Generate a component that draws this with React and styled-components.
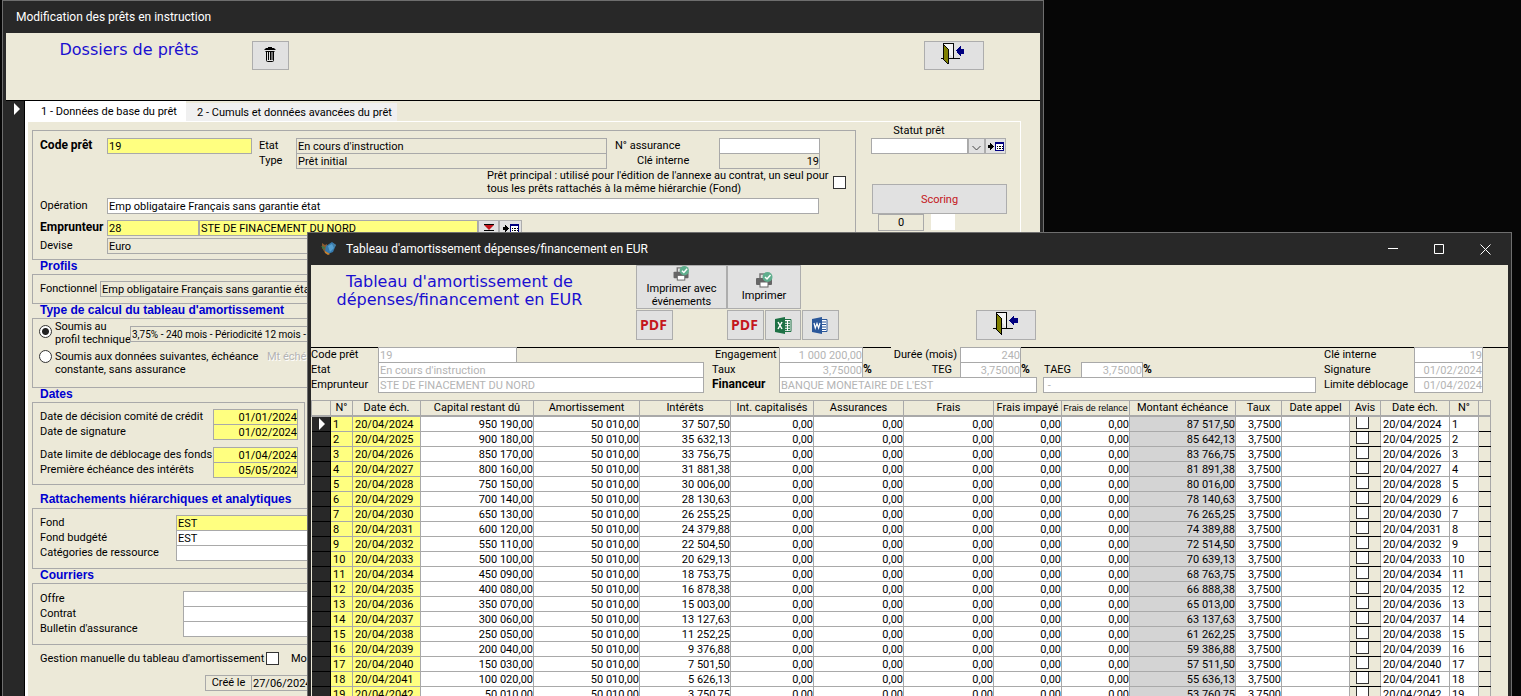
import React from "react";
import styled, { createGlobalStyle, css } from "styled-components";

const GlobalStyle = createGlobalStyle`
  *, *::before, *::after { box-sizing: border-box; }
  body { margin: 0; background: #060606; }
  body, input, button, select {
    font-family: Roboto, "Liberation Sans", sans-serif;
    font-size: 11px;
    line-height: 15px;
    color: #000;
  }
`;

const beige = "#ece9d8";
const yellow = "#ffff80";
const frame = "#282828";
const line = "#a9a9a9";

const Desktop = styled.main`
  position: relative;
  height: 100vh;
  overflow: hidden;
  background: #060606;
`;

const Window = styled.section`
  position: absolute;
  display: flex;
  flex-direction: column;
  background: ${frame};
  border: 1px solid #6e6e6e;
  border-bottom: 0;
  padding: 0 3px;
`;

const LoanWindow = styled(Window)`
  top: 0;
  left: 2px;
  width: 68.5vw;
  height: 100%;
`;

const ScheduleWindow = styled(Window)`
  top: 232px;
  left: 307px;
  right: 9px;
  bottom: 0;
`;

const TitleBar = styled.header`
  display: flex;
  flex: none;
  align-items: center;
  height: ${(p) => p.$h}px;
  padding-left: ${(p) => p.$pad}px;
  color: #fff;
  font-size: 12px;
  line-height: 16px;
`;

const WindowControls = styled.div`
  display: flex;
  margin-left: auto;
`;

const ControlButton = styled.button`
  display: flex;
  align-items: center;
  justify-content: center;
  width: 46px;
  height: 31px;
  padding: 0;
  border: 0;
  background: none;
`;

const Client = styled.div`
  display: flex;
  flex: 1;
  flex-direction: column;
  min-height: 0;
  overflow: hidden;
  background: ${beige};
`;

const Banner = styled.div`
  display: flex;
  flex: none;
  align-items: flex-start;
  height: ${(p) => p.$h}px;
  border-bottom: 1px solid #000;
`;

const BannerTitle = styled.h1`
  margin: 0;
  color: #1a0fd0;
  font: 16px/18px "DejaVu Sans", sans-serif;
  text-align: center;
`;

const Button = styled.button`
  display: flex;
  flex: none;
  flex-direction: column;
  align-items: center;
  justify-content: center;
  width: ${(p) => p.$w}px;
  height: ${(p) => p.$h || 30}px;
  padding: 0;
  border: 1px solid #adadad;
  background: #e1e1e1;
  color: ${(p) => p.$color || "#000"};
  line-height: 13px;
`;

const ExitButton = styled(Button)`
  padding: 0 3px 4px 0;
`;

const PdfButton = styled(Button)`
  padding-right: 2px;
  color: #c4161c;
  font: bold 14px/16px "Open Sans", sans-serif;
`;

const RecordArea = styled.div`
  display: flex;
  flex: 1;
  min-height: 0;
`;

const RecordBar = styled.div`
  flex: none;
  width: 19px;
  padding: 2px 0 0 8px;
  border-right: 1px solid #000;
  background: ${frame};
`;

const TabArea = styled.div`
  flex: 1;
  min-width: 0;
  margin-right: 19px;
`;

const TabList = styled.div`
  display: flex;
  align-items: flex-end;
  height: 20px;
`;

const Tab = styled.button`
  width: ${(p) => p.$w}px;
  height: ${(p) => (p.$active ? 20 : 18)}px;
  padding: 0 3px 0 ${(p) => (p.$active ? 10 : 9)}px;
  border: 0;
  background: ${(p) => (p.$active ? "#fff" : "#f0f0f0")};
  white-space: nowrap;
`;

const TabPanel = styled.div`
  display: flex;
  gap: 15px;
  height: 100%;
  padding-left: 4px;
  border: solid #fff;
  border-width: 1px 1px 0 3px;
`;

const FormColumn = styled.div`
  flex: none;
  width: 824px;
  padding-top: 8px;
`;

const SideColumn = styled.div`
  display: flex;
  flex-direction: column;
  width: 136px;
  padding-top: 1px;
`;

const Group = styled.section`
  height: ${(p) => p.$h}px;
  width: ${(p) => (p.$w ? p.$w + "px" : "auto")};
  padding: ${(p) => p.$top}px 7px 0;
  border: 1px solid ${line};
`;

const GroupPair = styled.div`
  display: flex;
  height: 83px;
`;

const GroupTitle = styled.h2`
  height: ${(p) => (p.$spaced ? 23 : 14)}px;
  margin: 0;
  padding: ${(p) => (p.$spaced ? 8 : 0)}px 0 0 8px;
  color: #0000d0;
  font: bold 12px/12px "Liberation Sans", sans-serif;
`;

const Row = styled.div`
  display: flex;
  align-items: flex-start;
  height: 15px;
  margin-top: ${(p) => p.$gap || 0}px;
  padding-left: ${(p) => p.$pad || 0}px;
`;

const Label = styled.label`
  flex: none;
  width: ${(p) => (p.$w ? p.$w + "px" : "auto")};
  padding-right: ${(p) => p.$padRight || 0}px;
  padding-left: ${(p) => p.$padLeft || 0}px;
  text-align: ${(p) => p.$align || "left"};
  line-height: 15px;
  white-space: nowrap;
  ${(p) => p.$masked && css`background: ${beige};`}
  ${(p) =>
    p.$bold &&
    css`
      font-weight: bold;
    `}
`;

const tones = {
  white: "#fff",
  yellow,
  flat: beige,
};

const Field = styled.input.attrs({ readOnly: true })`
  flex: ${(p) => (p.$w ? "none" : 1)};
  width: ${(p) => (p.$w ? p.$w + "px" : "auto")};
  min-width: 0;
  height: 16px;
  padding: 0 ${(p) => (p.$align === "right" ? 0 : 1)}px;
  border: 1px solid ${line};
  outline: 0;
  background: ${(p) => tones[p.$tone || "white"]};
  color: ${(p) => (p.$disabled ? "#b4b4b4" : "#000")};
  text-align: ${(p) => p.$align || "left"};
`;

const ProfileField = styled(Field)`
  margin-top: 6px;
  font-size: 10px;
`;

const StatusSelect = styled.select`
  appearance: none;
  width: 97px;
  height: 16px;
  padding: 0;
  border: 1px solid ${line};
  background: #fff;
`;

const DropArrow = styled.span`
  display: flex;
  align-items: flex-end;
  justify-content: center;
  width: 17px;
  height: 16px;
  padding-bottom: 2px;
  border: 1px solid #adadad;
  background: #e1e1e1;
`;

const NoteRow = styled.div`
  display: flex;
  height: 30px;
  padding: 1px 0 0 447px;
`;

const NoteText = styled.label`
  width: 346px;
  line-height: 13px;
  white-space: nowrap;
`;

const CheckBox = styled.input.attrs({ type: "checkbox" })`
  appearance: none;
  flex: none;
  width: 13px;
  height: 13px;
  margin: 0;
  border: 1px solid #333;
  background: #fff;
`;

const NoteCheck = styled(CheckBox)`
  margin-top: 7px;
`;

const Radio = styled.input.attrs({ type: "radio" })`
  appearance: none;
  flex: none;
  width: 13px;
  height: 13px;
  margin: ${(p) => p.$top}px 3px 0 -1px;
  border: 1px solid #333;
  border-radius: 50%;
  background: #fff;
  &:checked {
    background: radial-gradient(circle, #222 3px, #fff 4px);
  }
`;

const Choice = styled.div`
  display: flex;
  height: 26px;
  margin-bottom: 4px;
`;

const ChoiceText = styled.label`
  width: ${(p) => p.$w}px;
  line-height: 13px;
  white-space: nowrap;
`;

const DimText = styled.span`
  color: #b4b4b4;
  text-shadow: 1px 1px 0 #fff;
  line-height: 13px;
  white-space: nowrap;
`;

const ScoreRow = styled.div`
  display: flex;
  gap: 7px;
  padding-left: 7px;
`;

const ScoreField = styled(Field)`
  height: 17px;
`;

const ScoreSwatch = styled.div`
  width: 24px;
  height: 16px;
  background: #fff;
`;

const FootRow = styled.div`
  display: flex;
  gap: 12px;
  align-items: center;
  margin-top: 6px;
  padding-left: 8px;
`;

const PrintGroup = styled.div`
  display: flex;
  flex: none;
  flex-wrap: wrap;
  align-content: flex-start;
  width: 203px;
  row-gap: 1px;
`;

const PrintMain = styled.div`
  display: flex;
`;

const ExportRow = styled.div`
  display: flex;
  gap: 1px;
  & > :first-child { margin-right: 53px; }
`;

const Summary = styled.div`
  display: flex;
  flex: none;
  gap: 8px;
  height: 53px;
  margin-top: -1px;
  padding-right: 25px;
`;

const SummaryPart = styled.div`
  flex: ${(p) => (p.$w ? "none" : 1)};
  width: ${(p) => (p.$w ? p.$w + "px" : "auto")};
  min-width: 0;
`;

const Percent = styled.span`
  width: ${(p) => p.$w || 9}px;
  font-weight: bold;
  font-size: 12px;
`;

const Grid = styled.table`
  width: calc(100% - 17px);
  table-layout: fixed;
  border-collapse: collapse;
`;

const Head = styled.th`
  height: 15px;
  padding: 0;
  overflow: hidden;
  border: 1px solid ${line};
  border-bottom-width: 2px;
  font-weight: normal;
  line-height: 13px;
  white-space: nowrap;
  ${(p) =>
    p.$small &&
    css`
      font: 9px/12px "Liberation Sans", sans-serif;
    `}
`;

const cellTones = { white: "#fff", yellow, grey: "#d4d4d4", beige };

const Cell = styled.td`
  height: 15px;
  padding: ${(p) => (p.$check ? 0 : 1)}px ${(p) => (p.$align === "right" ? 0 : 2)}px 0;
  border: 1px solid ${line};
  border-bottom-color: ${(p) => (p.$tone === "beige" ? "#000" : line)};
  background: ${(p) => cellTones[p.$tone || "white"]};
  text-align: ${(p) => p.$align || "left"};
  line-height: 13px;
  white-space: nowrap;
`;

const RowMark = styled.th`
  height: 15px;
  padding: 0 0 0 3px;
  border: 1px solid #000;
  border-left: 0;
  background: ${frame};
  line-height: 0;
`;

const GridCheck = styled(CheckBox)`
  display: block;
  height: 12px;
  margin: 0 0 2px 4px;
  border-top: 0;
`;

const Pointer = () => (
  <svg width="7" height="12" viewBox="0 0 7 12" aria-hidden="true">
    <path d="M0 0 L6 6 L0 12Z" fill="#fff" />
  </svg>
);

const TrashIcon = () => (
  <svg width="13" height="17" viewBox="0 0 13 17" fill="none" stroke="#000" aria-hidden="true">
    <path d="M4 .5h4M1.500 1.500h9" />
    <path d="M.5 2.500h11" />
    <path d="M1.500 4.500h9M2.500 4v9.500q0 1 1 1h5q1 0 1-1V4M4.500 5v8M6.500 5v8M8 5v8" />
  </svg>
);

const ExitIcon = () => (
  <svg width="26" height="24" viewBox="0 0 26 24" shapeRendering="crispEdges" aria-hidden="true">
    <path d="M1 17.500h3M10 17.500h11" stroke="#000" />
    <path d="M3.500 1.500h11v16" fill="#f4f4f4" stroke="#000" />
    <path d="M4 2L9 7V23L4 18Z" fill="#808000" stroke="#000" />
    <path d="M17 9l5-5v3h4v5h-4v3z" fill="#000080" />
  </svg>
);

const PrinterIcon = () => (
  <svg width="17" height="16" viewBox="0 0 17 16" aria-hidden="true">
    <path d="M4 7V2h7" fill="none" stroke="#777" strokeWidth="1.500" />
    <rect x="0" y="6" width="16" height="7" rx="1" fill="#666" />
    <rect x="4" y="10" width="8" height="5" fill="#fff" stroke="#666" />
    <circle cx="11.500" cy="5" r="5" fill="#5fae8d" />
    <path d="M9 5l2 2 3.500-4" fill="none" stroke="#fff" strokeWidth="1.500" />
  </svg>
);

const ExcelIcon = () => (
  <svg width="17" height="17" viewBox="0 0 17 17" aria-hidden="true">
    <path d="M9 2.500h7v12H9" fill="#fff" stroke="#1e7145" />
    <path d="M10 5h2M13 5h2M10 7.500h2M13 7.500h2M10 10h2M13 10h2M10 12.500h2M13 12.500h2" stroke="#1e7145" strokeWidth="1.300" />
    <path d="M0 2L10 0V17L0 15Z" fill="#1e7145" />
    <path d="M3 5l4 7M7 5l-4 7" stroke="#fff" strokeWidth="1.500" />
  </svg>
);

const WordIcon = () => (
  <svg width="17" height="17" viewBox="0 0 17 17" aria-hidden="true">
    <path d="M9 2.500h6v12H9" fill="#fff" stroke="#2b579a" />
    <path d="M10 5h4M10 7.500h4M10 10h4M10 12.500h4" stroke="#2b579a" />
    <path d="M0 2L10 0V17L0 15Z" fill="#2b579a" />
    <path d="M2 6l1.300 5L5 6.500 6.600 11 8 6" fill="none" stroke="#fff" strokeWidth="1.200" />
  </svg>
);

const AppIcon = () => (
  <svg width="16" height="14" viewBox="0 0 16 14" aria-hidden="true">
    <path d="M1 1l3 2 2-1v8l-2 1-3-5z" fill="#8c5a30" />
    <path d="M0 4l4 1-1 3z" fill="#3a7a4a" />
    <path d="M5 4l6-4 4 3-3 7-5 2-3-3z" fill="#3579ad" />
    <path d="M7 4l4-2 2 4-4 4z" fill="#559fd0" />
    <path d="M4 9l5 3-2 1-3-2z" fill="#c9822f" />
    <path d="M12 1l3 2-2 3z" fill="#4a7fa0" />
  </svg>
);

const TableIcon = () => (
  <svg width="18" height="11" viewBox="0 0 18 11" shapeRendering="crispEdges" aria-hidden="true">
    <path d="M1 4h2V2l4 3.500L3 9V7H1z" fill="#000" />
    <rect x="8.500" y="1.500" width="8" height="8" fill="#fff" stroke="#000080" />
    <path d="M8 1h9v2H8z" fill="#000080" />
    <path d="M10 5.500h1M12 5.500h2M15 5.500h1M10 7.500h1M12 7.500h2M15 7.500h1" stroke="#000" />
  </svg>
);

const DropIcon = () => (
  <svg width="10" height="9" viewBox="0 0 10 9" aria-hidden="true">
    <path d="M0 1l5 5 5-5z" fill="#c4161c" />
    <path d="M0 .5h10M0 6.500h10" stroke="#000" />
  </svg>
);

const Chevron = () => (
  <svg width="9" height="6" viewBox="0 0 9 6" fill="none" stroke="#444" aria-hidden="true">
    <path d="M.5 1l4 4 4-4" />
  </svg>
);

const amount = (cents) => {
  const whole = String(Math.floor(cents / 100)).replace(/\B(?=(\d{3})+$)/g, "\u00a0");
  return `${whole},${String(cents % 100).padStart(2, "0")}`;
};

const REPAYMENT = 50010;
const COUNT = 20;
const schedule = Array.from({ length: COUNT - 1 }, (_, i) => {
  const interest = Math.round(((COUNT - i) * REPAYMENT * 375) / 100);
  return {
    n: i + 1,
    date: `20/04/${2024 + i}`,
    remaining: amount((COUNT - 1 - i) * REPAYMENT * 100),
    repayment: amount(REPAYMENT * 100),
    interest: amount(interest),
    due: amount(REPAYMENT * 100 + interest),
  };
});

const columns = [
  ["", 19], ["N°", 22], ["Date éch.", 68], ["Capital restant dû", 113], ["Amortissement", 106],
  ["Intérêts", 91], ["Int. capitalisés", 83], ["Assurances", 90], ["Frais", null], ["Frais impayé", 68],
  ["Frais de relance", 68], ["Montant échéance", 106], ["Taux", 46], ["Date appel", 68], ["Avis", 31],
  ["Date éch.", 69], ["N°", 29], ["", 12],
];

const TextRow = ({ id, label, labelWidth, value, width, tone, align, gap, bold, pad, disabled }) => (
  <Row $gap={gap} $pad={pad}>
    <Label htmlFor={id} $w={labelWidth} $bold={bold}>{label}</Label>
    <Field id={id} $w={width} $tone={tone} $align={align} $disabled={disabled} defaultValue={value} />
  </Row>
);

const LoanHeading = styled(BannerTitle)`
  width: 246px;
  padding-top: 8px;
`;

const LoanTools = styled.div`
  display: flex;
  flex: 1;
  justify-content: space-between;
  padding: 8px 56px 0 0;
`;

const CreatedRow = styled(Row)`
  margin-top: 9px;
  padding-left: 173px;
`;

const CreatedLabel = styled(Label)`
  width: 47px;
  height: 16px;
  margin-right: -1px;
  border: 1px solid ${line};
  line-height: 14px;
  text-align: center;
`;

const ScoringButton = styled(Button)`
  margin: 31px 0 0 1px;
`;

function LoanForm() {
  return (
    <LoanWindow aria-label="Modification des prêts en instruction">
      <TitleBar $h={32} $pad={10}>Modification des prêts en instruction</TitleBar>
      <Client>
        <Banner $h={68}>
          <LoanHeading>Dossiers de prêts</LoanHeading>
          <LoanTools>
            <Button $w={37} $h={29} aria-label="Supprimer"><TrashIcon /></Button>
            <ExitButton $w={60} $h={29} aria-label="Quitter"><ExitIcon /></ExitButton>
          </LoanTools>
        </Banner>
        <RecordArea>
          <RecordBar><Pointer /></RecordBar>
          <TabArea>
            <TabList role="tablist">
              <Tab role="tab" aria-selected="true" $active $w={161}>1 - Données de base du prêt</Tab>
              <Tab role="tab" aria-selected="false" $w={211}>2 - Cumuls et données avancées du prêt</Tab>
            </TabList>
            <TabPanel role="tabpanel">
              <FormColumn>
                <Group $h={130} $top={7}>
                  <Row>
                    <LoanLabel htmlFor="code">Code prêt</LoanLabel>
                    <Field id="code" $w={145} $tone="yellow" defaultValue="19" />
                    <Label htmlFor="state" $w={44} $padLeft={7}>Etat</Label>
                    <Field id="state" $w={311} $tone="flat" defaultValue="En cours d'instruction" />
                    <Label htmlFor="insurance" $w={112} $padLeft={8}>N° assurance</Label>
                    <Field id="insurance" $w={101} />
                  </Row>
                  <Row $pad={212}>
                    <Label htmlFor="type" $w={44} $padLeft={7}>Type</Label>
                    <Field id="type" $w={311} $tone="flat" defaultValue="Prêt initial" />
                    <Label htmlFor="key" $w={112} $padLeft={30}>Clé interne</Label>
                    <Field id="key" $w={101} $tone="flat" $align="right" defaultValue="19" />
                  </Row>
                  <NoteRow>
                    <NoteText htmlFor="main">
                      Prêt principal : utilisé pour l'édition de l'annexe au contrat, un seul pour
                      <br />
                      tous les prêts rattachés à la même hiérarchie (Fond)
                    </NoteText>
                    <NoteCheck id="main" />
                  </NoteRow>
                  <TextRow id="operation" label="Opération" labelWidth={67} width={712} value="Emp obligataire Français sans garantie état" />
                  <Row $gap={7}>
                    <LoanLabel htmlFor="borrower">Emprunteur</LoanLabel>
                    <Field id="borrower" $w={92} $tone="yellow" defaultValue="28" />
                    <Field aria-label="Nom de l'emprunteur" $w={279} $tone="yellow" defaultValue="STE DE FINACEMENT DU NORD" />
                    <Button $w={21} $h={16} aria-label="Choisir l'emprunteur"><DropIcon /></Button>
                    <Button $w={23} $h={16} aria-label="Fiche emprunteur"><TableIcon /></Button>
                  </Row>
                  <TextRow id="currency" gap={3} label="Devise" labelWidth={67} width={391} tone="flat" value="Euro" />
                </Group>
                <GroupTitle>Profils</GroupTitle>
                <Group $h={30} $top={6}>
                  <TextRow id="profile" label="Fonctionnel" labelWidth={60} width={391} tone="flat" value="Emp obligataire Français sans garantie état" />
                </Group>
                <GroupTitle>Type de calcul du tableau d'amortissement</GroupTitle>
                <Group $h={70} $top={1}>
                  <Choice>
                    <Radio id="tech" name="calc" $top={5} defaultChecked />
                    <ChoiceText htmlFor="tech" $w={75}>Soumis au<br />profil technique</ChoiceText>
                    <ProfileField aria-label="Profil technique" $w={391} $tone="flat" defaultValue="3,75% - 240 mois - Périodicité 12 mois - Amortissement constant" />
                  </Choice>
                  <Choice>
                    <Radio id="data" name="calc" $top={0} />
                    <ChoiceText htmlFor="data" $w={212}>Soumis aux données suivantes, échéance<br />constante, sans assurance</ChoiceText>
                    <DimText>Mt échéance</DimText>
                  </Choice>
                </Group>
                <GroupTitle>Dates</GroupTitle>
                <GroupPair>
                  <Group $h={83} $w={273} $top={6}>
                    <TextRow id="d1" label="Date de décision comité de crédit" labelWidth={173} width={85} tone="yellow" align="right" value="01/01/2024" />
                    <TextRow id="d2" label="Date de signature" labelWidth={173} width={85} tone="yellow" align="right" value="01/02/2024" />
                    <TextRow id="d3" gap={8} label="Date limite de déblocage des fonds" labelWidth={173} width={85} tone="yellow" align="right" value="01/04/2024" />
                    <TextRow id="d4" label="Première échéance des intérêts" labelWidth={173} width={85} tone="yellow" align="right" value="05/05/2024" />
                  </Group>
                </GroupPair>
                <GroupTitle $spaced>Rattachements hiérarchiques et analytiques</GroupTitle>
                <Group $h={61} $top={6}>
                  <TextRow id="fund" label="Fond" labelWidth={136} width={391} tone="yellow" value="EST" />
                  <TextRow id="budget" label="Fond budgété" labelWidth={136} width={391} value="EST" />
                  <TextRow id="category" label="Catégories de ressource" labelWidth={136} width={391} />
                </Group>
                <GroupTitle>Courriers</GroupTitle>
                <Group $h={62} $top={7}>
                  <TextRow id="offer" label="Offre" labelWidth={143} width={391} />
                  <TextRow id="contract" label="Contrat" labelWidth={143} width={391} />
                  <TextRow id="bulletin" label="Bulletin d'assurance" labelWidth={143} width={391} />
                </Group>
                <FootRow>
                  <Label htmlFor="manual" $w={214}>Gestion manuelle du tableau d'amortissement</Label>
                  <CheckBox id="manual" />
                  <span>Mode</span>
                </FootRow>
                <CreatedRow>
                  <CreatedLabel htmlFor="created">Créé le</CreatedLabel>
                  <Field id="created" $w={100} $tone="flat" defaultValue="27/06/2024" />
                </CreatedRow>
              </FormColumn>
              <SideColumn>
                <Label htmlFor="status" $align="center" $padRight={40}>Statut prêt</Label>
                <Row>
                  <StatusSelect id="status" />
                  <DropArrow><Chevron /></DropArrow>
                  <Button $w={21} $h={16} aria-label="Liste des statuts"><TableIcon /></Button>
                </Row>
                <ScoringButton $w={135} $color="#c4161c">Scoring</ScoringButton>
                <ScoreRow>
                  <ScoreField aria-label="Score" $w={46} $tone="flat" $align="center" defaultValue="0" />
                  <ScoreSwatch />
                </ScoreRow>
              </SideColumn>
            </TabPanel>
          </TabArea>
        </RecordArea>
      </Client>
    </LoanWindow>
  );
}

const LoanLabel = styled(Label)`
  width: 67px;
  font: bold 12px/15px Roboto, sans-serif;
`;

const ScheduleHeading = styled(BannerTitle)`
  width: 297px;
  margin-right: 6px;
  padding-top: 8px;
`;

const PrintButton = styled(Button)`
  gap: 1px;
`;

const ScheduleBanner = styled(Banner)`
  gap: 22px;
`;

const ExitSlot = styled.div`
  padding: 45px 0 0 115px;
`;

const ScheduleCaption = styled.span`
  margin-left: 9px;
`;

const DurationGap = styled.span`
  width: 28px;
`;

const FinancerExtra = styled(Field)`
  margin-left: 6px;
`;

function ScheduleView() {
  return (
    <ScheduleWindow aria-label="Tableau d'amortissement">
      <TitleBar $h={32} $pad={10}>
        <AppIcon />
        <ScheduleCaption>Tableau d'amortissement dépenses/financement en EUR</ScheduleCaption>
        <WindowControls>
          <ControlButton aria-label="Réduire">
            <svg width="10" height="10" stroke="#fff"><path d="M0 4.500h10" /></svg>
          </ControlButton>
          <ControlButton aria-label="Agrandir">
            <svg width="10" height="10" stroke="#fff" fill="none"><path d="M.5.5h9v9h-9z" /></svg>
          </ControlButton>
          <ControlButton aria-label="Fermer">
            <svg width="11" height="11" stroke="#fff"><path d="M.5.5l10 10M10.500.5l-10 10" /></svg>
          </ControlButton>
        </WindowControls>
      </TitleBar>
      <Client>
        <ScheduleBanner $h={83}>
          <ScheduleHeading>Tableau d'amortissement de dépenses/financement en EUR</ScheduleHeading>
          <PrintGroup>
            <PrintMain>
              <PrintButton $w={91} $h={44}><PrinterIcon /><span>Imprimer avec<br />événements</span></PrintButton>
              <PrintButton $w={74} $h={44}><PrinterIcon /><span>Imprimer</span></PrintButton>
            </PrintMain>
            <ExportRow>
              <PdfButton $w={37}>PDF</PdfButton>
              <PdfButton $w={37}>PDF</PdfButton>
              <Button $w={36} aria-label="Excel"><ExcelIcon /></Button>
              <Button $w={37} aria-label="Word"><WordIcon /></Button>
            </ExportRow>
          </PrintGroup>
          <ExitSlot><ExitButton $w={60} aria-label="Quitter"><ExitIcon /></ExitButton></ExitSlot>
        </ScheduleBanner>
        <Summary>
          <SummaryPart $w={393}>
            <TextRow id="s1" label="Code prêt" labelWidth={67} width={139} value="19" disabled />
            <TextRow id="s2" label="Etat" labelWidth={67} value="En cours d'instruction" disabled />
            <TextRow id="s3" label="Emprunteur" labelWidth={67} value="STE DE FINACEMENT DU NORD" disabled />
          </SummaryPart>
          <SummaryPart>
            <Row>
              <Label htmlFor="s4" $w={67} $padLeft={3}>Engagement</Label>
              <Field id="s4" $w={84} $align="right" $disabled defaultValue="1 000 200,00" />
              <DurationGap />
              <Label htmlFor="s5" $w={69} $padRight={3} $align="right" $masked>Durée (mois)</Label>
              <Field id="s5" $w={61} $align="right" $disabled defaultValue="240" />
            </Row>
            <Row>
              <Label htmlFor="s6" $w={67}>Taux</Label>
              <Field id="s6" $w={84} $align="right" $disabled defaultValue="3,75000" />
              <Percent $w={28}>%</Percent>
              <Label htmlFor="s7" $w={69} $padRight={8} $align="right">TEG</Label>
              <Field id="s7" $w={61} $align="right" $disabled defaultValue="3,75000" />
              <Percent $w={23}>%</Percent>
              <Label htmlFor="s8" $w={37}>TAEG</Label>
              <Field id="s8" $w={62} $align="right" $disabled defaultValue="3,75000" />
              <Percent>%</Percent>
            </Row>
            <Row>
              <LoanLabel htmlFor="s9">Financeur</LoanLabel>
              <Field id="s9" $w={258} $disabled defaultValue="BANQUE MONETAIRE DE L'EST" />
              <FinancerExtra aria-label="Complément" $disabled defaultValue=" -" />
            </Row>
          </SummaryPart>
          <SummaryPart $w={159}>
            <TextRow id="s10" label="Clé interne" labelWidth={90} width={69} align="right" value="19" disabled />
            <TextRow id="s11" label="Signature" labelWidth={90} width={69} align="right" value="01/02/2024" disabled />
            <TextRow id="s12" label="Limite déblocage" labelWidth={90} width={69} align="right" value="01/04/2024" disabled />
          </SummaryPart>
        </Summary>
        <Grid>
          <colgroup>
            {columns.map(([, w], i) => <col key={i} width={w || undefined} />)}
          </colgroup>
          <thead>
            <tr>
              {columns.map(([name], i) => <Head key={i} $small={name === "Frais de relance"}>{name}</Head>)}
            </tr>
          </thead>
          <tbody>
            {schedule.map((r, i) => (
              <tr key={r.n}>
                <RowMark>{i === 0 && <Pointer />}</RowMark>
                <Cell $tone="yellow">{r.n}</Cell>
                <Cell $tone="yellow">{r.date}</Cell>
                <Cell $align="right">{r.remaining}</Cell>
                <Cell $align="right">{r.repayment}</Cell>
                <Cell $align="right">{r.interest}</Cell>
                <Cell $align="right">0,00</Cell>
                <Cell $align="right">0,00</Cell>
                <Cell $align="right">0,00</Cell>
                <Cell $align="right">0,00</Cell>
                <Cell $align="right">0,00</Cell>
                <Cell $tone="grey" $align="right">{r.due}</Cell>
                <Cell $align="right">3,7500</Cell>
                <Cell />
                <Cell $tone="beige" $check><GridCheck aria-label={`Avis ${r.n}`} /></Cell>
                <Cell>{r.date}</Cell>
                <Cell>{r.n}</Cell>
                <Cell $tone="beige" />
              </tr>
            ))}
          </tbody>
        </Grid>
      </Client>
    </ScheduleWindow>
  );
}

export default function App() {
  return (
    <>
      <GlobalStyle />
      <Desktop>
        <LoanForm />
        <ScheduleView />
      </Desktop>
    </>
  );
}
